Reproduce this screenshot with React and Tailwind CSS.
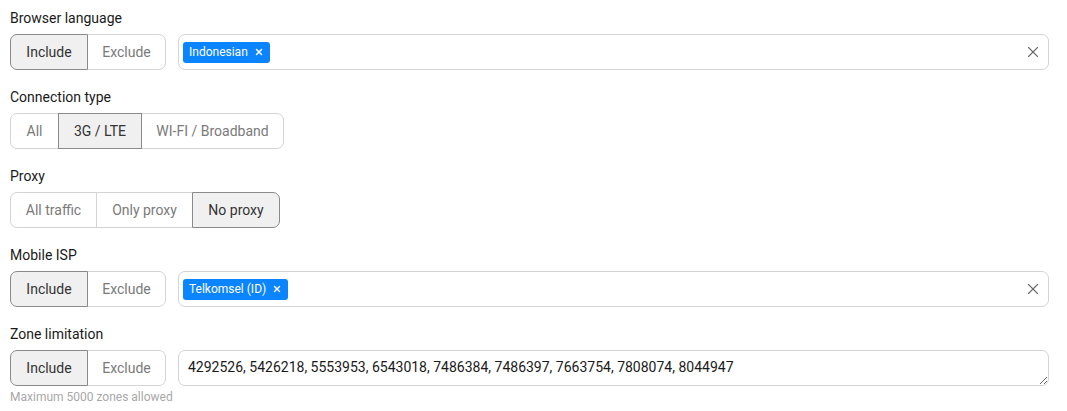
import { X } from 'lucide-react';

function Segmented({ options, active }) {
  return (
    <div className="flex h-[36px] shrink-0">
      {options.map((opt, i) => {
        const on = i === active;
        const first = i === 0;
        const last = i === options.length - 1;
        return (
          <button
            key={opt.label}
            className={
              'flex h-full items-center justify-center border text-[14px] ' +
              (first ? 'rounded-l-[7px] ' : '-ml-px ') +
              (last ? 'rounded-r-[7px] ' : '') +
              (on
                ? 'relative z-10 border-[#8a8a8a] bg-[#f0f0f0] text-[#333]'
                : 'border-[#d4d4d4] bg-white text-[#7a7a7a]')
            }
            style={{ width: opt.w }}
          >
            {opt.label}
          </button>
        );
      })}
    </div>
  );
}

function TagInput({ tag }) {
  return (
    <div className="flex h-[36px] flex-1 items-center rounded-[7px] border border-[#d4d4d4] bg-white pl-[4px] pr-[6px]">
      <span className="flex h-[21px] items-center gap-[6px] rounded-[3px] bg-[#0b84ff] px-[6px] text-[12px] text-white">
        {tag}
        <X size={10} strokeWidth={3.5} />
      </span>
      <span className="flex-1" />
      <X size={18} strokeWidth={1.5} className="text-[#6a6a6a]" />
    </div>
  );
}

function Field({ label, children }) {
  return (
    <div className="flex flex-col gap-[6px]">
      <div className="h-[20px] text-[14px] leading-[20px] text-[#1a1a1a]">{label}</div>
      {children}
    </div>
  );
}

const incExc = [
  { label: 'Include', w: 78 },
  { label: 'Exclude', w: 79 },
];

export default function App() {
  return (
    <div
      className="flex min-h-screen flex-col gap-[17px] bg-white px-[10px] pt-[8px] pr-[18px]"
      style={{ fontFamily: 'Roboto, "Liberation Sans", sans-serif' }}
    >
      <Field label="Browser language">
        <div className="flex gap-[12px]">
          <Segmented options={incExc} active={0} />
          <TagInput tag="Indonesian" />
        </div>
      </Field>

      <Field label="Connection type">
        <Segmented
          options={[
            { label: 'All', w: 49 },
            { label: '3G / LTE', w: 84 },
            { label: 'WI-FI / Broadband', w: 143 },
          ]}
          active={1}
        />
      </Field>

      <Field label="Proxy">
        <Segmented
          options={[
            { label: 'All traffic', w: 87 },
            { label: 'Only proxy', w: 97 },
            { label: 'No proxy', w: 88 },
          ]}
          active={2}
        />
      </Field>

      <Field label="Mobile ISP">
        <div className="flex gap-[12px]">
          <Segmented options={incExc} active={0} />
          <TagInput tag="Telkomsel (ID)" />
        </div>
      </Field>

      <Field label="Zone limitation">
        <div className="flex flex-col gap-[3px]">
          <div className="flex gap-[12px]">
            <Segmented options={incExc} active={0} />
            <textarea
              className="h-[36px] flex-1 resize-y rounded-[7px] border border-[#d4d4d4] px-[9px] pt-[6px] text-[14px] leading-[20px] text-[#1a1a1a] outline-none"
              defaultValue="4292526, 5426218, 5553953, 6543018, 7486384, 7486397, 7663754, 7808074, 8044947"
            />
          </div>
          <div className="text-[12px] leading-[16px] text-[#a8a8a8]">Maximum 5000 zones allowed</div>
        </div>
      </Field>
    </div>
  );
}
